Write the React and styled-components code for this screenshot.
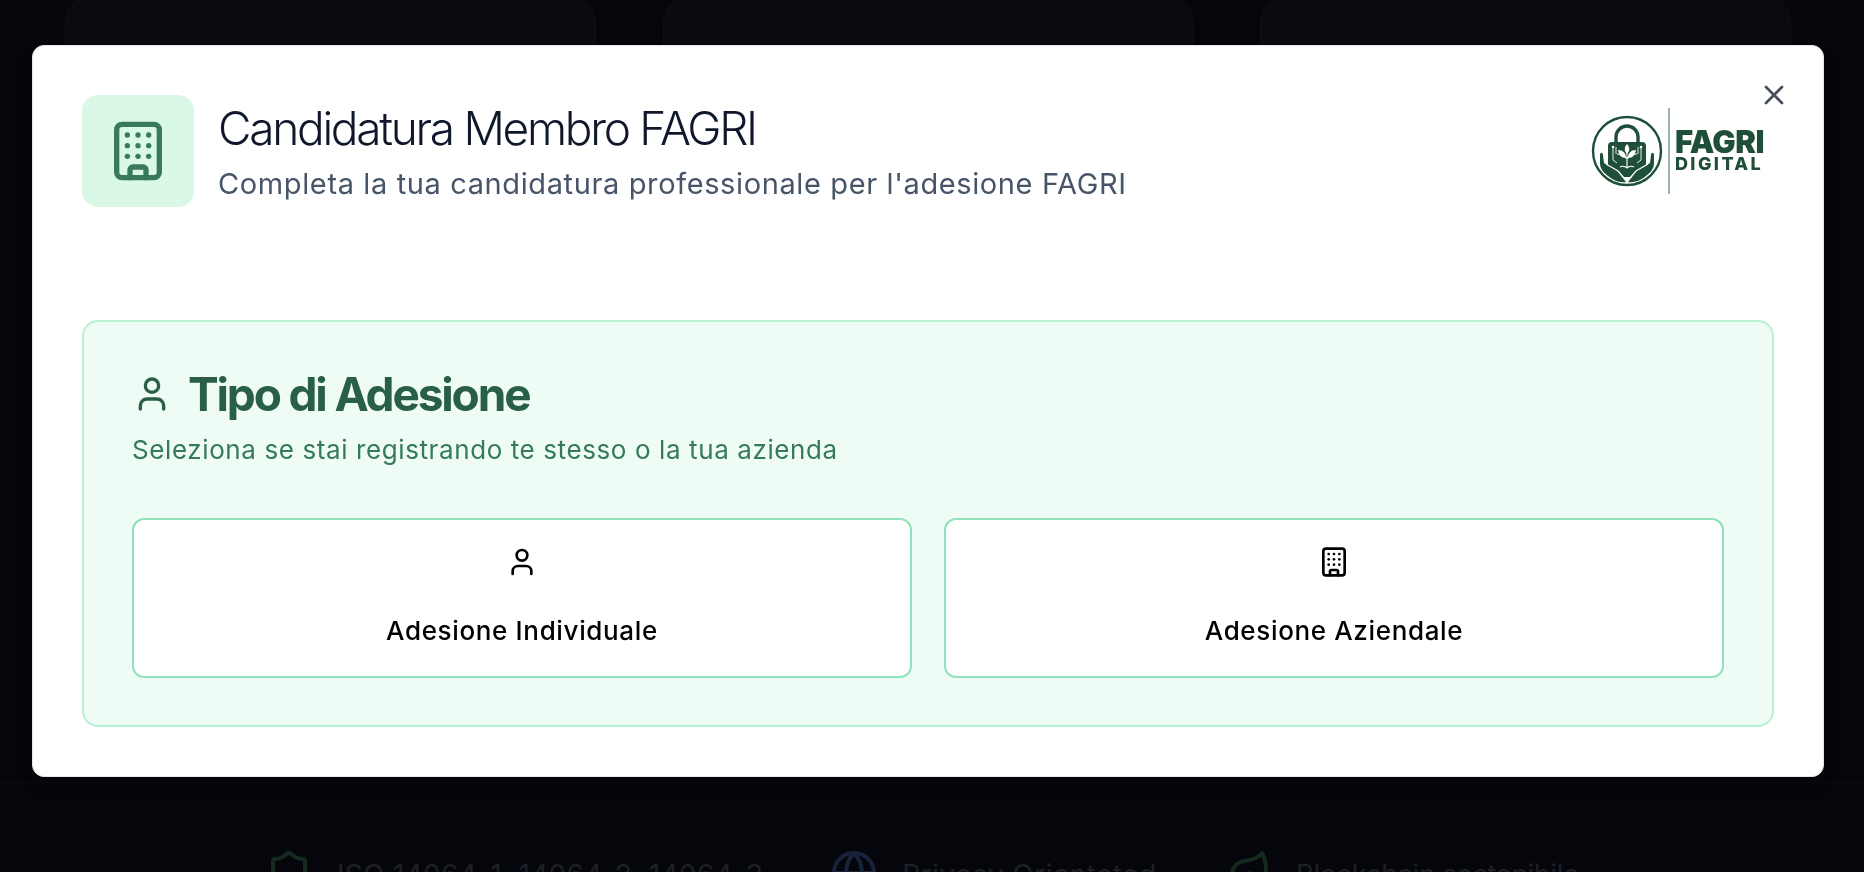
import React from "react";
import styled, { createGlobalStyle } from "styled-components";
import { Building, User, X, Shield, Globe, Leaf } from "lucide-react";

const Global = createGlobalStyle`
  html, body { margin: 0; padding: 0; height: 100%; overflow: hidden; background: #04060b; }
  * { box-sizing: border-box; }
  body { font-family: Inter, "Liberation Sans", sans-serif; }
`;

const Page = styled.div`
  height: 872px;
  overflow: hidden;
  display: flex;
  flex-direction: column;
  background: #04060b;
`;
const CardGrid = styled.div`
  height: 791px;
  flex: none;
  margin-top: -8px;
  padding: 0 73px 0 65px;
  display: grid;
  grid-template-columns: repeat(3, 531px);
  justify-content: space-between;
  border-bottom: 1px solid #0a0c10;
`;
const GhostCard = styled.div`
  height: 500px;
  background: #090b0f;
  border: 1px solid #0e1014;
  border-radius: 32px;
`;
const Footer = styled.div`
  margin-top: 8px;
  padding: 58px 0 0 265px;
  display: flex;
  gap: 67px;
`;
const FootItem = styled.div`
  display: flex;
  gap: 24px;
  flex: none;
  color: ${(p) => p.$color};
`;
const FootText = styled.span`
  padding-top: 2px;
  font-size: 28px;
  line-height: 48px;
  letter-spacing: ${(p) => p.$spacing};
  color: #1e2025;
  white-space: nowrap;
`;

const Overlay = styled.div`
  position: fixed;
  inset: 0;
  display: flex;
  justify-content: flex-start;
  align-items: flex-start;
  padding: 45px 40px 95px 32px;
`;
const Modal = styled.div`
  position: relative;
  width: 1792px;
  height: 732px;
  padding: 49px;
  background: #fff;
  border: 1px solid #e5e7eb;
  border-radius: 12px;
  box-shadow: 0 10px 15px rgba(0, 0, 0, 0.1);
`;
const CloseBtn = styled.button`
  position: absolute;
  top: 33px;
  right: 33px;
  width: 32px;
  height: 32px;
  padding: 0;
  display: flex;
  border: 0;
  background: none;
  color: #475059;
`;
const Header = styled.div`
  display: flex;
  align-items: center;
  height: 112px;
  gap: 24px;
`;
const IconBox = styled.div`
  flex: none;
  width: 112px;
  height: 112px;
  border-radius: 16px;
  background: #d9f8e6;
  color: #3a7a5a;
  display: flex;
  align-items: center;
  justify-content: center;
`;
const HeadText = styled.div`
  flex: 1;
`;
const Title = styled.h2`
  margin: 0;
  font-size: 46px;
  line-height: 56px;
  font-weight: 300;
  letter-spacing: -2.28px;
  color: #0f172a;
`;
const Subtitle = styled.p`
  margin: 10px 0 0;
  font-size: 29px;
  line-height: 36px;
  font-weight: 400;
  letter-spacing: 0.62px;
  color: #475569;
`;
const LogoWrap = styled.div`
  flex: none;
  height: 88px;
  margin-right: 10px;
  display: flex;
  align-items: center;
  color: #1f4f38;
`;
const Mark = styled.svg`
  flex: none;
`;
const Divider = styled.div`
  flex: none;
  width: 1.5px;
  height: 86px;
  margin: 0 5px 0 5px;
  background: #9db5a9;
`;
const LogoText = styled.div`
  display: flex;
  flex-direction: column;
  color: #1f4f38;
`;
const LogoMain = styled.span`
  font-size: 31px;
  line-height: 26px;
  font-weight: 900;
  letter-spacing: -0.5px;
`;
const LogoSub = styled.span`
  font-size: 18px;
  line-height: 18px;
  font-weight: 800;
  letter-spacing: 2.4px;
`;
const Panel = styled.section`
  margin-top: 113px;
  height: 407px;
  padding: 48px;
  background: #eefcf5;
  border: 2px solid #b8f0d3;
  border-radius: 16px;
`;
const PanelTitle = styled.h3`
  margin: 0;
  display: flex;
  align-items: center;
  gap: 16px;
  height: 48px;
  font-size: 46px;
  line-height: 48px;
  font-weight: 700;
  letter-spacing: -2.15px;
  color: #2a5f47;
`;
const PanelSub = styled.p`
  margin: 16px 0 0;
  font-size: 26px;
  line-height: 32px;
  letter-spacing: 0.6px;
  color: #357a5c;
`;
const Choices = styled.div`
  margin-top: 52px;
  display: grid;
  grid-template-columns: 1fr 1fr;
  gap: 32px;
`;
const Choice = styled.button`
  height: 160px;
  padding: 0 0 4px;
  display: flex;
  flex-direction: column;
  align-items: center;
  justify-content: center;
  gap: 37px;
  background: #fff;
  border: 2px solid #8fe3ba;
  border-radius: 12px;
  color: #000;
  font-family: inherit;
  font-size: 26px;
  line-height: 32px;
  font-weight: 500;
  letter-spacing: 0.65px;
`;

const LogoMark = () => (
  <Mark width="72" height="72" viewBox="-36 -36 72 72" fill="none">
    <circle cx="0" cy="0" r="34" stroke="#1f4f38" strokeWidth="2.4" />
    <path d="M-11 -7V-14a11 11 0 0 1 22 0V-7" stroke="#1f4f38" strokeWidth="3.4" />
    <path d="M-15 -9H15a4 4 0 0 1 4 4V14L5 26H-5L-19 14V-5a4 4 0 0 1 4-4Z" fill="#1f4f38" />
    <path d="M0 17V-2M0 8C-3 4-7 3-10 3M0 8C3 4 7 3 10 3M0 17C-2 15-5 15-7 16M0 17C2 15 5 15 7 16" stroke="#fff" strokeWidth="1.1" />
    <path d="M0 3C-3 0-3-4 0-7C3-4 3 0 0 3ZM-1 7C-6 7-8 4-9-1C-4-1-1 2-1 7ZM1 7C6 7 8 4 9-1C4-1 1 2 1 7Z" fill="#fff" />
    <path d="M-14 -3V9L-10 12M14 -3V9L10 12M-11 -4V3M11 -4V3" stroke="#fff" strokeWidth="0.9" />
    <circle cx="-14" cy="-4" r="1.3" fill="#fff" />
    <circle cx="14" cy="-4" r="1.3" fill="#fff" />
    <path d="M-27 4C-27 1-24 1-24 4L-23 12L-13 18C-10 16-8 19-10 21L-5 26L-1 31C-8 32-14 29-19 25C-23 22-27 18-27 12Z" fill="#1f4f38" />
    <path d="M27 4C27 1 24 1 24 4L23 12L13 18C10 16 8 19 10 21L5 26L1 31C8 32 14 29 19 25C23 22 27 18 27 12Z" fill="#1f4f38" />
    <path d="M-21 13L-9 20L-3 27M21 13L9 20L3 27" stroke="#fff" strokeWidth="1.2" />
  </Mark>
);

export default function App() {
  return (
    <Page>
      <Global />
      <CardGrid>
        <GhostCard />
        <GhostCard />
        <GhostCard />
      </CardGrid>
      <Footer>
        <FootItem $color="#16291f">
          <Shield size={48} />
          <FootText $spacing="0.3px">ISO 14064-1, 14064-2, 14064-3</FootText>
        </FootItem>
        <FootItem $color="#17233a">
          <Globe size={48} />
          <FootText $spacing="0.5px">Privacy Orientated</FootText>
        </FootItem>
        <FootItem $color="#16291f">
          <Leaf size={48} />
          <FootText $spacing="-0.5px">Blockchain sostenibile</FootText>
        </FootItem>
      </Footer>
      <Overlay>
        <Modal>
          <CloseBtn aria-label="Chiudi">
            <X size={32} />
          </CloseBtn>
          <Header>
            <IconBox>
              <Building size={64} />
            </IconBox>
            <HeadText>
              <Title>Candidatura Membro FAGRI</Title>
              <Subtitle>Completa la tua candidatura professionale per l'adesione FAGRI</Subtitle>
            </HeadText>
            <LogoWrap>
              <LogoMark />
              <Divider />
              <LogoText>
                <LogoMain>FAGRI</LogoMain>
                <LogoSub>DIGITAL</LogoSub>
              </LogoText>
            </LogoWrap>
          </Header>
          <Panel>
            <PanelTitle>
              <User size={40} />
              Tipo di Adesione
            </PanelTitle>
            <PanelSub>Seleziona se stai registrando te stesso o la tua azienda</PanelSub>
            <Choices>
              <Choice>
                <User size={32} />
                Adesione Individuale
              </Choice>
              <Choice>
                <Building size={32} />
                Adesione Aziendale
              </Choice>
            </Choices>
          </Panel>
        </Modal>
      </Overlay>
    </Page>
  );
}
